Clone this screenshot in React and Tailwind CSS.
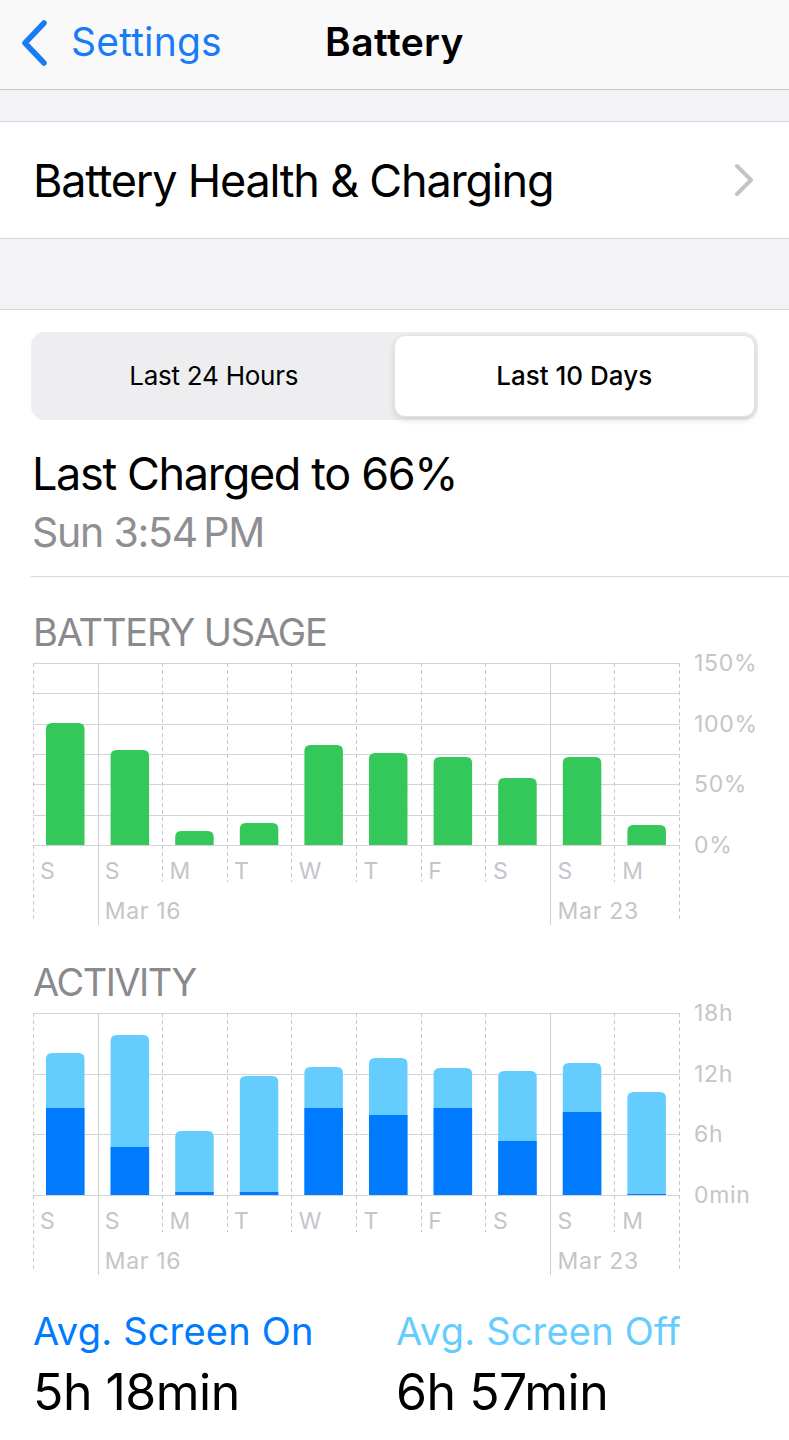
import React from 'react';

const COL = 64.6;
const PLOT_W = 647;
const BASE = 182;
const TOTAL_H = 262;

const days = ['S', 'S', 'M', 'T', 'W', 'T', 'F', 'S', 'S', 'M'];

// heights in px above the baseline
const usage = [122, 95, 14, 22, 100, 92, 88, 67, 88, 20];
const activity = [
  [142, 87], [160, 48], [64, 3], [119, 3], [128, 87],
  [137, 80], [127, 87], [124, 54], [132, 83], [103, 1],
];

function topRounded(x, w, h, r) {
  const t = BASE - h;
  const rr = Math.min(r, h);
  return `M${x},${BASE} V${t + rr} Q${x},${t} ${x + rr},${t} H${x + w - rr} Q${x + w},${t} ${x + w},${t + rr} V${BASE} Z`;
}

function Grid({ steps, children }) {
  const hs = [];
  for (let k = 0; k <= steps; k++) hs.push(Math.round((k * BASE) / steps) + 0.5);
  return (
    <svg width={PLOT_W + 1} height={TOTAL_H} className="absolute inset-0">
      {hs.map((y) => (
        <line key={y} x1="0" x2={PLOT_W} y1={y} y2={y} stroke="#d4d4d8" strokeWidth="1" />
      ))}
      {Array.from({ length: 11 }).map((_, i) => {
        const x = Math.round(i * COL) + 0.5;
        const solid = i === 1 || i === 8;
        const outer = i === 0 || i === 10;
        const len = solid ? TOTAL_H : outer ? 259 : 219;
        return (
          <line
            key={i}
            x1={x}
            x2={x}
            y1="0"
            y2={len}
            stroke={solid ? '#cfcfd3' : '#c9c9cd'}
            strokeWidth="1"
            strokeDasharray={solid ? undefined : '4 3'}
          />
        );
      })}
      {children}
    </svg>
  );
}

function Labels() {
  return (
    <>
      <div className="h-[182px]" />
      <div className="grid grid-cols-10 mt-[15px] h-[22px] text-[23px] leading-[22px] tracking-[0.02em] text-[#c5c5c9]">
        {days.map((d, i) => (
          <span key={i} className="pl-[7px]">{d}</span>
        ))}
      </div>
      <div className="grid grid-cols-10 mt-[18px] h-[22px] text-[23px] leading-[22px] tracking-[0.03em] text-[#c5c5c9]">
        <span />
        <span className="pl-[7px] whitespace-nowrap">Mar 16</span>
        <span /><span /><span /><span /><span /><span />
        <span className="pl-[7px] whitespace-nowrap">Mar 23</span>
        <span />
      </div>
    </>
  );
}

function Axis({ labels }) {
  return (
    <div className="ml-[14px] -mt-[11px] flex h-[204px] flex-col justify-between text-[23px] leading-[22px] tracking-[0.03em] text-[#c5c5c9]">
      {labels.map((l) => (
        <span key={l}>{l}</span>
      ))}
    </div>
  );
}

function UsageChart() {
  return (
    <div className="flex items-start pl-[33px]">
      <div className="relative w-[647px] h-[262px]">
        <Grid steps={6}>
          {usage.map((h, i) => (
            <path key={i} d={topRounded(i * COL + 13, 38.5, h, 6)} fill="#34c759" />
          ))}
        </Grid>
        <div className="relative">
          <Labels />
        </div>
      </div>
      <Axis labels={['150%', '100%', '50%', '0%']} />
    </div>
  );
}

function ActivityChart() {
  return (
    <div className="flex items-start pl-[33px]">
      <div className="relative w-[647px] h-[262px]">
        <Grid steps={3}>
          {activity.map(([total, on], i) => (
            <g key={i}>
              <path d={topRounded(i * COL + 13, 38.5, total, 6)} fill="#64cdfe" />
              <rect x={i * COL + 13} y={BASE - on} width="38.5" height={on} fill="#007aff" />
            </g>
          ))}
        </Grid>
        <div className="relative">
          <Labels />
        </div>
      </div>
      <Axis labels={['18h', '12h', '6h', '0min']} />
    </div>
  );
}

export default function App() {
  return (
    <div className="w-[789px] min-h-[1440px] bg-white font-[Inter,'Noto_Sans',sans-serif] text-black">
      {/* Nav bar */}
      <div className="relative flex h-[90px] items-center border-b border-[#c6c6c8] bg-[#f9f9f9] pb-[7px]">
        <div className="flex items-center pl-[20px] text-[#1a7cf5]">
          <svg width="28" height="46" viewBox="0 0 28 46" className="mt-[3px]">
            <path d="M24 3 L5 23 L24 43" fill="none" stroke="#1a7cf5" strokeWidth="5.5" strokeLinecap="round" strokeLinejoin="round" />
          </svg>
          <span className="ml-[23px] text-[39px] leading-[39px] tracking-[0.005em]">Settings</span>
        </div>
        <span className="absolute left-0 right-0 text-center text-[39px] leading-[39px] font-semibold tracking-[0.01em] pointer-events-none">
          Battery
        </span>
      </div>

      <div className="h-[32px] border-b border-[#d5d5d9] bg-[#f2f2f7]" />

      {/* Battery Health row */}
      <div className="flex h-[117px] items-center justify-between border-b border-[#d5d5d9] pl-[33px] pr-[34px]">
        <span className="text-[45px] leading-[45px] tracking-[-0.027em]">Battery Health &amp; Charging</span>
        <svg width="22" height="34" viewBox="0 0 22 34">
          <path d="M4 3 L18 17 L4 31" fill="none" stroke="#c4c4c7" strokeWidth="4" strokeLinecap="round" strokeLinejoin="round" />
        </svg>
      </div>

      <div className="h-[71px] border-b border-[#d5d5d9] bg-[#f2f2f7]" />

      {/* Segmented control */}
      <div className="mx-[31px] mt-[22px] flex h-[88px] rounded-[14px] bg-[#eeeef0] p-[3px]">
        <div className="flex flex-1 items-center justify-center text-[26px] leading-[26px] tracking-[-0.01em]">Last 24 Hours</div>
        <div className="flex flex-1 items-center justify-center rounded-[11px] border border-[#e2e2e4] bg-white text-[26px] leading-[26px] font-medium shadow-[0_3px_6px_rgba(0,0,0,0.12)]">
          Last 10 Days
        </div>
      </div>

      {/* Last charged */}
      <div className="pl-[32px]">
        <div className="mt-[31px] text-[45px] leading-[45px] tracking-[-0.03em]">Last Charged to 66%</div>
        <div className="mt-[16px] text-[41px] leading-[41px] tracking-[-0.03em] text-[#8e8e93]">Sun 3:54{'\u202F'}PM</div>
      </div>
      <div className="ml-[31px] mt-[23px] border-b border-[#d8d8dc]" />

      {/* Battery usage */}
      <div className="mt-[36px] pl-[33px] text-[38px] leading-[38px] tracking-[-0.03em] text-[#8a8a8e]">BATTERY USAGE</div>
      <div className="mt-[12px]">
        <UsageChart />
      </div>

      {/* Activity */}
      <div className="mt-[38px] pl-[33px] text-[38px] leading-[38px] tracking-[-0.04em] text-[#8a8a8e]">ACTIVITY</div>
      <div className="mt-[12px]">
        <ActivityChart />
      </div>

      {/* Averages */}
      <div className="mt-[37px] grid grid-cols-[363px_1fr] pl-[33px]">
        <div>
          <div className="text-[38px] leading-[38px] tracking-[0.005em] text-[#007aff]">Avg. Screen On</div>
          <div className="mt-[17px] text-[50px] leading-[50px] tracking-[-0.01em]">5h 18min</div>
        </div>
        <div>
          <div className="text-[38px] leading-[38px] tracking-[0.005em] text-[#64cdfe]">Avg. Screen Off</div>
          <div className="mt-[17px] text-[50px] leading-[50px] tracking-[-0.01em]">6h 57min</div>
        </div>
      </div>
    </div>
  );
}
